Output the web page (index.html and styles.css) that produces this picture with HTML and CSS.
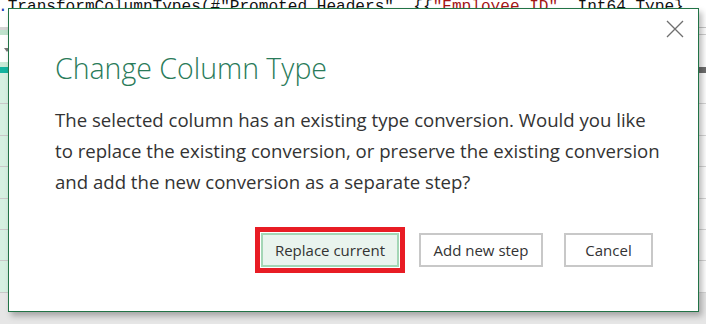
FILE: index.html
```html
<!DOCTYPE html>
<html>
<head>
<meta charset="utf-8">
<link rel="stylesheet" href="styles.css">
</head>
<body>
<div class="app">
  <div class="formula"><span class="fn">.</span>TransformColumnTypes(#"Promoted Headers", {{<span class="str">"Employee ID"</span>, Int64.Type}</div>
  <div class="row row-a"><div class="lc"></div><div class="rc"></div></div>
  <div class="row row-b"><div class="lc"></div><div class="rc"></div></div>
  <div class="row row-h"><div class="lc"><span class="dd"></span></div><div class="rc"></div></div>
  <div class="row row-c"><div class="lc"></div><div class="rc"></div></div>
  <div class="row row-d"><div class="lc"></div><div class="rc"></div></div>
  <div class="row data"><div class="lc"></div><div class="rc"></div></div>
  <div class="row data"><div class="lc"></div><div class="rc"></div></div>
  <div class="row data"><div class="lc"></div><div class="rc"></div></div>
  <div class="row data"><div class="lc"></div><div class="rc"></div></div>
  <div class="row data"><div class="lc"></div><div class="rc"></div></div>
  <div class="row data"><div class="lc"></div><div class="rc"></div></div>
  <div class="row data"><div class="lc"></div><div class="rc"></div></div>
  <div class="rest"></div>
</div>

<div class="dialog" role="dialog">
  <div class="topbar">
    <button class="close" aria-label="Close">
      <svg width="18" height="18" viewBox="0 0 18 18"><path d="M1 1 L17 17 M17 1 L1 17" stroke="#6f6f6f" stroke-width="1.3" fill="none"/></svg>
    </button>
  </div>
  <h1 class="title">Change Column Type</h1>
  <p class="msg">The selected column has an existing type conversion. Would you like<br>to replace the existing conversion, or preserve the existing conversion<br>and add the new conversion as a separate step?</p>
  <div class="actions">
    <div class="highlight"><button class="btn primary">Replace current</button></div>
    <button class="btn">Add new step</button>
    <button class="btn cancel">Cancel</button>
  </div>
</div>
</body>
</html>
```
FILE: styles.css
```css
html, body {
  margin: 0;
  padding: 0;
  width: 706px;
  height: 324px;
  overflow: hidden;
  background: #e6e6e6;
}
.app {
  display: flex;
  flex-direction: column;
  width: 706px;
  height: 324px;
}
.formula {
  flex: none;
  background: #fff;
  font-family: "Liberation Mono", monospace;
  font-size: 16.1px;
  line-height: 19px;
  white-space: nowrap;
  margin-left: -2px;
  margin-top: -2px;
  height: 29px;
  color: #111;
  overflow: hidden;
}
.formula .fn { color: #1b3fb8; }
.formula .str { color: #a31515; }
.row {
  display: flex;
  flex: none;
}
.lc { width: 300px; flex: none; position: relative; }
.rc { flex: 1; background: #fff; }
.row-a { height: 3px; }
.row-a .lc { background: #d4d4d4; }
.row-a .rc { border-top: 1px solid #c9c9c9; }
.row-b { height: 5px; }
.row-b .lc { background: #bfe3cd; }
.row-b .rc { border-bottom: 1px solid #cfcfcf; }
.row-h { height: 27px; }
.row-h .lc { background: #fff; }
.dd {
  position: absolute;
  left: 4px;
  top: 13px;
  width: 0;
  height: 0;
  border-left: 3px solid transparent;
  border-right: 3px solid transparent;
  border-top: 4px solid #777;
}
.row-c { height: 5px; }
.row-c .lc { background: #c8ead6; }
.row-d { height: 6px; }
.row-d .lc { background: #14b39f; }
.row-d .rc { background: #6e6e6e; }
.data { height: 31.4px; box-sizing: border-box; }
.data .lc { background: #d5f0e1; border-bottom: 1px solid #c9c9c9; }
.data .rc { border-bottom: 1px solid #d6d6d6; }
.rest { flex: 1; background: #e6e6e6; }

.dialog {
  position: absolute;
  left: 8px;
  top: 8px;
  width: 691px;
  height: 304px;
  box-sizing: border-box;
  background: #fff;
  border: 1px solid #217346;
  box-shadow: 3px 4px 6px rgba(0, 0, 0, 0.28);
  display: flex;
  flex-direction: column;
  font-family: "Open Sans", "Noto Sans", sans-serif;
}
.topbar {
  display: flex;
  justify-content: flex-end;
  padding: 11px 14px 0 0;
}
.close {
  width: 18px;
  height: 18px;
  padding: 0;
  margin: 0;
  border: none;
  background: none;
  display: flex;
}
.title {
  margin: 11px 0 0 46px;
  font-weight: 300;
  font-size: 28.5px;
  line-height: 38px;
  color: #2a7b5a;
}
.msg {
  margin: 17px 10px 0 46px;
  font-size: 18.6px;
  line-height: 31px;
  color: #333;
  white-space: nowrap;
}
.actions {
  display: flex;
  align-items: center;
  justify-content: flex-end;
  margin: 30px 45px 0 0;
  gap: 14px;
}
.highlight {
  border: 5px solid #e81c24;
  padding: 1px;
  background: #fff;
  display: flex;
}
.btn {
  height: 34px;
  box-sizing: border-box;
  border: 2px solid #c8c8c8;
  background: #fff;
  font-family: "Open Sans", "Noto Sans", sans-serif;
  font-size: 15px;
  color: #333;
  padding: 0;
  width: 124px;
}
.btn.primary {
  width: 138px;
  background: #e9f4ee;
  border-color: #a3d6b6;
}
.btn.cancel {
  width: 89px;
  margin-left: 7px;
}
```
